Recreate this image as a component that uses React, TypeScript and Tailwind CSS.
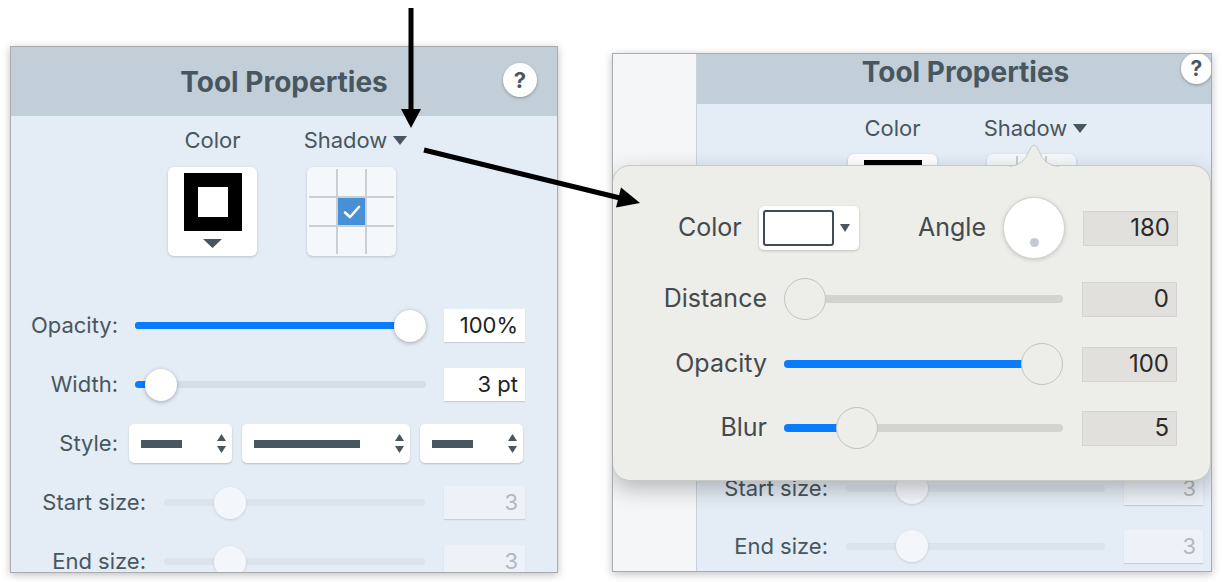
import React from "react";

const ink = "text-[#48575f]";

function Caret({ className = "" }: { className?: string }) {
  return (
    <svg width="14" height="9" viewBox="0 0 14 9" className={className}>
      <path d="M0 0 H14 L7 9 Z" fill="#48575f" />
    </svg>
  );
}

function Stepper() {
  return (
    <div className="flex flex-col items-center gap-[5px]">
      <svg width="9" height="7" viewBox="0 0 9 7">
        <path d="M4.5 0 L9 7 H0 Z" fill="#48575f" />
      </svg>
      <svg width="9" height="7" viewBox="0 0 9 7">
        <path d="M0 0 H9 L4.5 7 Z" fill="#48575f" />
      </svg>
    </div>
  );
}

function HelpButton({ className }: { className: string }) {
  return (
    <div
      className={`absolute flex items-center justify-center rounded-full bg-white font-bold ${ink} shadow-[0_1px_3px_rgba(0,0,0,0.3)] ${className}`}
    >
      ?
    </div>
  );
}

type SliderProps = {
  value: number;
  r: number;
  fill: boolean;
  track: string;
  thumb: string;
  h: string;
};

function Slider({ value, r, fill, track, thumb, h }: SliderProps) {
  return (
    <div className="relative flex flex-1 items-center" style={{ height: r * 2 }}>
      <div className={`w-full rounded-full ${h} ${track}`} />
      {fill && (
        <div
          className={`absolute left-0 rounded-full bg-[#0a7cff] ${h}`}
          style={{ width: `calc(${r}px + ${value} * (100% - ${2 * r}px))` }}
        />
      )}
      <div
        className={`absolute top-0 rounded-full ${thumb}`}
        style={{ left: `calc(${value} * (100% - ${2 * r}px))`, width: 2 * r, height: 2 * r }}
      />
    </div>
  );
}

function ColorSwatch() {
  return (
    <div className="flex h-[89px] w-[89px] flex-col items-center rounded-[6px] bg-white pt-[6px] shadow-[0_1px_3px_rgba(0,0,0,0.18)]">
      <div className="flex h-[58px] w-[58px] items-center justify-center bg-black">
        <div className="h-[30px] w-[30px] bg-white" />
      </div>
      <svg width="19" height="9" viewBox="0 0 19 9" className="mt-[8px]">
        <path d="M0 0 H19 L9.5 9 Z" fill="#48575f" />
      </svg>
    </div>
  );
}

function ShadowGrid() {
  const cells = [0, 1, 2, 3, 4, 5, 6, 7, 8];
  return (
    <div className="h-[89px] w-[89px] rounded-[6px] bg-[#f5f8fb] p-[2px] shadow-[0_1px_3px_rgba(0,0,0,0.18)]">
      <div className="grid h-full w-full grid-cols-3 grid-rows-3 gap-[2px] bg-[#c9cfd4]">
        {cells.map((i) =>
          i === 4 ? (
            <div key={i} className="flex items-center justify-center bg-[#4790d6]">
              <svg width="18" height="14" viewBox="0 0 18 14">
                <path d="M2 7.5 L7 12 L16 2" fill="none" stroke="white" strokeWidth="2.6" strokeLinecap="round" strokeLinejoin="round" />
              </svg>
            </div>
          ) : (
            <div key={i} className="bg-[#f5f8fb]" />
          )
        )}
      </div>
    </div>
  );
}

function ValueBox({ value, disabled }: { value: string; disabled?: boolean }) {
  return (
    <div
      className={`flex h-[33px] w-full items-center justify-end pr-[7px] text-[22px] shadow-[0_1px_1px_rgba(0,0,0,0.12)] ${
        disabled ? "bg-[#edf2f8] text-[#b2b8be]" : "bg-white text-[#222]"
      }`}
    >
      {value}
    </div>
  );
}

function StyleSelect({ w, bar }: { w: string; bar: string }) {
  return (
    <div className={`flex h-[39px] items-center justify-between rounded-[5px] bg-white pl-[12px] pr-[6px] shadow-[0_1px_2px_rgba(0,0,0,0.2)] ${w}`}>
      <div className={`h-[8px] bg-[#48575f] ${bar}`} />
      <Stepper />
    </div>
  );
}

const activeThumb = "bg-white shadow-[0_1px_4px_rgba(0,0,0,0.3)]";
const offThumb = "bg-[#f3f6fa] shadow-[0_1px_3px_rgba(0,0,0,0.12)]";

function PanelBody({ right }: { right?: boolean }) {
  const rowH = right ? "h-[58px]" : "h-[59px]";
  const labelW = right ? "w-[103px]" : "w-[107px]";
  const sizeW = right ? "w-[131px]" : "w-[135px]";
  const inputW = right ? "w-[79px]" : "w-[81px]";
  const pr = right ? "pr-[8px]" : "pr-[32px]";
  // rows hidden under the open popover
  const covered = right ? "invisible" : "";
  return (
    <div className={`flex flex-1 flex-col bg-[#e4ecf5] text-[22px] ${ink}`}>
      <div className={`flex justify-center gap-[50px] ${right ? "mt-[12px] pl-[16px]" : "mt-[12px] pr-[4px]"}`}>
        <div className="flex w-[89px] flex-col items-center">
          <div className="h-[24px] leading-[24px]">Color</div>
          <div className={right ? "mt-[14px]" : "mt-[15px]"}>
            <ColorSwatch />
          </div>
        </div>
        <div className="flex w-[89px] flex-col items-center">
          <div className="flex h-[24px] items-center gap-[6px] whitespace-nowrap pl-[8px] leading-[24px]">
            Shadow
            <Caret />
          </div>
          <div className={right ? "mt-[14px]" : "mt-[15px]"}>
            <ShadowGrid />
          </div>
        </div>
      </div>

      <div className={`flex flex-col ${right ? "mt-[42px]" : "mt-[40px]"} ${pr}`}>
        <div className={`flex items-center ${rowH} ${covered}`}>
          <div className={`shrink-0 text-right ${labelW}`}>Opacity:</div>
          <div className="ml-[17px] flex flex-1">
            <Slider value={1} r={16} fill track="bg-[#0a7cff]" thumb={activeThumb} h="h-[7px]" />
          </div>
          <div className={`ml-[18px] shrink-0 ${inputW}`}>
            <ValueBox value="100%" />
          </div>
        </div>
        <div className={`flex items-center ${rowH} ${covered}`}>
          <div className={`shrink-0 text-right ${labelW}`}>Width:</div>
          <div className="ml-[17px] flex flex-1">
            <Slider value={0.04} r={16} fill track="bg-[#d5dde6]" thumb={activeThumb} h="h-[7px]" />
          </div>
          <div className={`ml-[18px] shrink-0 ${inputW}`}>
            <ValueBox value="3 pt" />
          </div>
        </div>
        <div className={`flex items-center ${rowH} ${covered}`}>
          <div className={`shrink-0 text-right ${labelW}`}>Style:</div>
          <div className="ml-[11px] flex gap-[10px]">
            <StyleSelect w="w-[103px]" bar="w-[41px]" />
            <StyleSelect w={right ? "w-[150px]" : "w-[168px]"} bar={right ? "w-[96px]" : "w-[106px]"} />
            <StyleSelect w="w-[103px]" bar="w-[41px]" />
          </div>
        </div>
        <div className={`flex items-center ${rowH}`}>
          <div className={`shrink-0 whitespace-nowrap text-right ${sizeW}`}>Start size:</div>
          <div className="ml-[18px] flex flex-1">
            <Slider value={0.22} r={16} fill={false} track="bg-[#dbe3ec]" thumb={offThumb} h="h-[7px]" />
          </div>
          <div className={`ml-[19px] shrink-0 ${inputW}`}>
            <ValueBox value="3" disabled />
          </div>
        </div>
        <div className={`flex items-center ${rowH}`}>
          <div className={`shrink-0 whitespace-nowrap text-right ${sizeW}`}>End size:</div>
          <div className="ml-[18px] flex flex-1">
            <Slider value={0.22} r={16} fill={false} track="bg-[#dbe3ec]" thumb={offThumb} h="h-[7px]" />
          </div>
          <div className={`ml-[19px] shrink-0 ${inputW}`}>
            <ValueBox value="3" disabled />
          </div>
        </div>
      </div>
    </div>
  );
}

const popThumb = "border-[1.5px] border-[#c4c4c2] bg-[#edede9]";

function PopInput({ value }: { value: string }) {
  return (
    <div className="ml-[19px] flex h-[35px] w-[95px] shrink-0 items-center justify-end border border-[#d5d4d0] bg-[#e1e0dc] pr-[7px] text-[24px] text-[#2a2a2a]">
      {value}
    </div>
  );
}

function PopRow({ label, value, v, fill, className }: { label: string; value: string; v: number; fill: boolean; className: string }) {
  return (
    <div className={`flex h-[44px] items-center ${className}`}>
      <div className="w-[154px] shrink-0 text-right">{label}</div>
      <div className="ml-[17px] flex w-[279px] shrink-0">
        <Slider value={v} r={21} fill={fill} track="bg-[#d3d3d1]" thumb={popThumb} h="h-[8px]" />
      </div>
      <PopInput value={value} />
    </div>
  );
}

function ShadowPopover() {
  return (
    <div className="absolute left-[-1px] top-[111px] h-[316px] w-[599px] rounded-[18px] border border-[#c8c8c5] bg-[#edede9] text-[25px] text-[#444a4e] shadow-[0_8px_22px_rgba(0,0,0,0.25)]">
      <svg width="50" height="26" viewBox="0 0 50 26" className="absolute left-[396px] top-[-25px]">
        <path d="M0 26 Q15 25 20 10 Q25 -2 30 10 Q35 25 50 26 Z" fill="#edede9" />
        <path d="M0 25.5 Q15 24.5 20 10 Q25 -2 30 10 Q35 24.5 50 25.5" fill="none" stroke="#c8c8c5" strokeWidth="1" />
      </svg>

      <div className="mt-[40px] flex h-[44px] items-center">
        <div className="ml-[65px] w-[64px] shrink-0">Color</div>
        <div className="ml-[17px] flex h-[44px] w-[100px] shrink-0 items-center rounded-[5px] bg-white pl-[4px] shadow-[0_1px_3px_rgba(0,0,0,0.2)]">
          <div className="h-[36px] w-[71px] rounded-[3px] border-2 border-[#3f4c54] bg-white" />
          <svg width="10" height="8" viewBox="0 0 10 8" className="ml-[6px]">
            <path d="M0 0 H10 L5 8 Z" fill="#48575f" />
          </svg>
        </div>
        <div className="ml-[59px] w-[69px] shrink-0">Angle</div>
        <div className="ml-[17px] flex h-[60px] w-[60px] shrink-0 flex-col items-center justify-end rounded-full bg-white pb-[11px] shadow-[0_0_0_1px_#d4d4d0,0_1px_5px_rgba(0,0,0,0.25)]">
          <div className="h-[9px] w-[9px] rounded-full bg-[#c6cbd1]" />
        </div>
        <PopInput value="180" />
      </div>

      <PopRow label="Distance" value="0" v={0} fill={false} className="mt-[27px]" />
      <PopRow label="Opacity" value="100" v={1} fill className="mt-[21px]" />
      <PopRow label="Blur" value="5" v={0.22} fill className="mt-[20px]" />
    </div>
  );
}

function Arrows() {
  return (
    <svg width="1222" height="582" viewBox="0 0 1222 582" className="pointer-events-none absolute left-0 top-0">
      <line x1="411" y1="8" x2="411" y2="112" stroke="black" strokeWidth="5" />
      <path d="M401 109 H421 L411 128 Z" fill="black" />
      <line x1="424" y1="150" x2="620" y2="198" stroke="black" strokeWidth="5" />
      <path d="M640 203 L616 207.5 L621 187.5 Z" fill="black" />
    </svg>
  );
}

export default function App() {
  return (
    <div className="relative flex h-[582px] w-[1222px] items-start overflow-hidden bg-white [font-family:Inter,'Noto_Sans',sans-serif]">
      {/* original panel */}
      <div className="ml-[10px] mt-[46px] flex h-[527px] w-[548px] flex-col overflow-hidden border border-[#a8adb2] shadow-[0_2px_8px_rgba(0,0,0,0.25)]">
        <div className="relative flex h-[69px] shrink-0 items-center justify-center bg-[#c2ced8]">
          <div className={`text-[28px] font-bold ${ink}`}>Tool Properties</div>
          <HelpButton className="right-[20px] top-[16px] h-[34px] w-[34px] text-[22px]" />
        </div>
        <PanelBody />
      </div>

      {/* panel with shadow popover open */}
      <div className="relative ml-[54px] mt-[53px] flex h-[519px] w-[600px] overflow-hidden border border-[#a8adb2] shadow-[0_2px_8px_rgba(0,0,0,0.25)]">
        <div className="w-[84px] shrink-0 border-r border-[#c9d3dc] bg-[#f4f6f8]" />
        <div className="flex flex-1 flex-col">
          <div className="relative flex h-[50px] shrink-0 justify-center bg-[#c2ced8] pl-[23px] pt-[1px]">
            <div className={`text-[28px] font-bold leading-[34px] ${ink}`}>Tool Properties</div>
            <HelpButton className="right-[-1px] top-[-1px] h-[31px] w-[31px] text-[21px]" />
          </div>
          <PanelBody right />
        </div>
        <ShadowPopover />
      </div>

      <Arrows />
    </div>
  );
}
